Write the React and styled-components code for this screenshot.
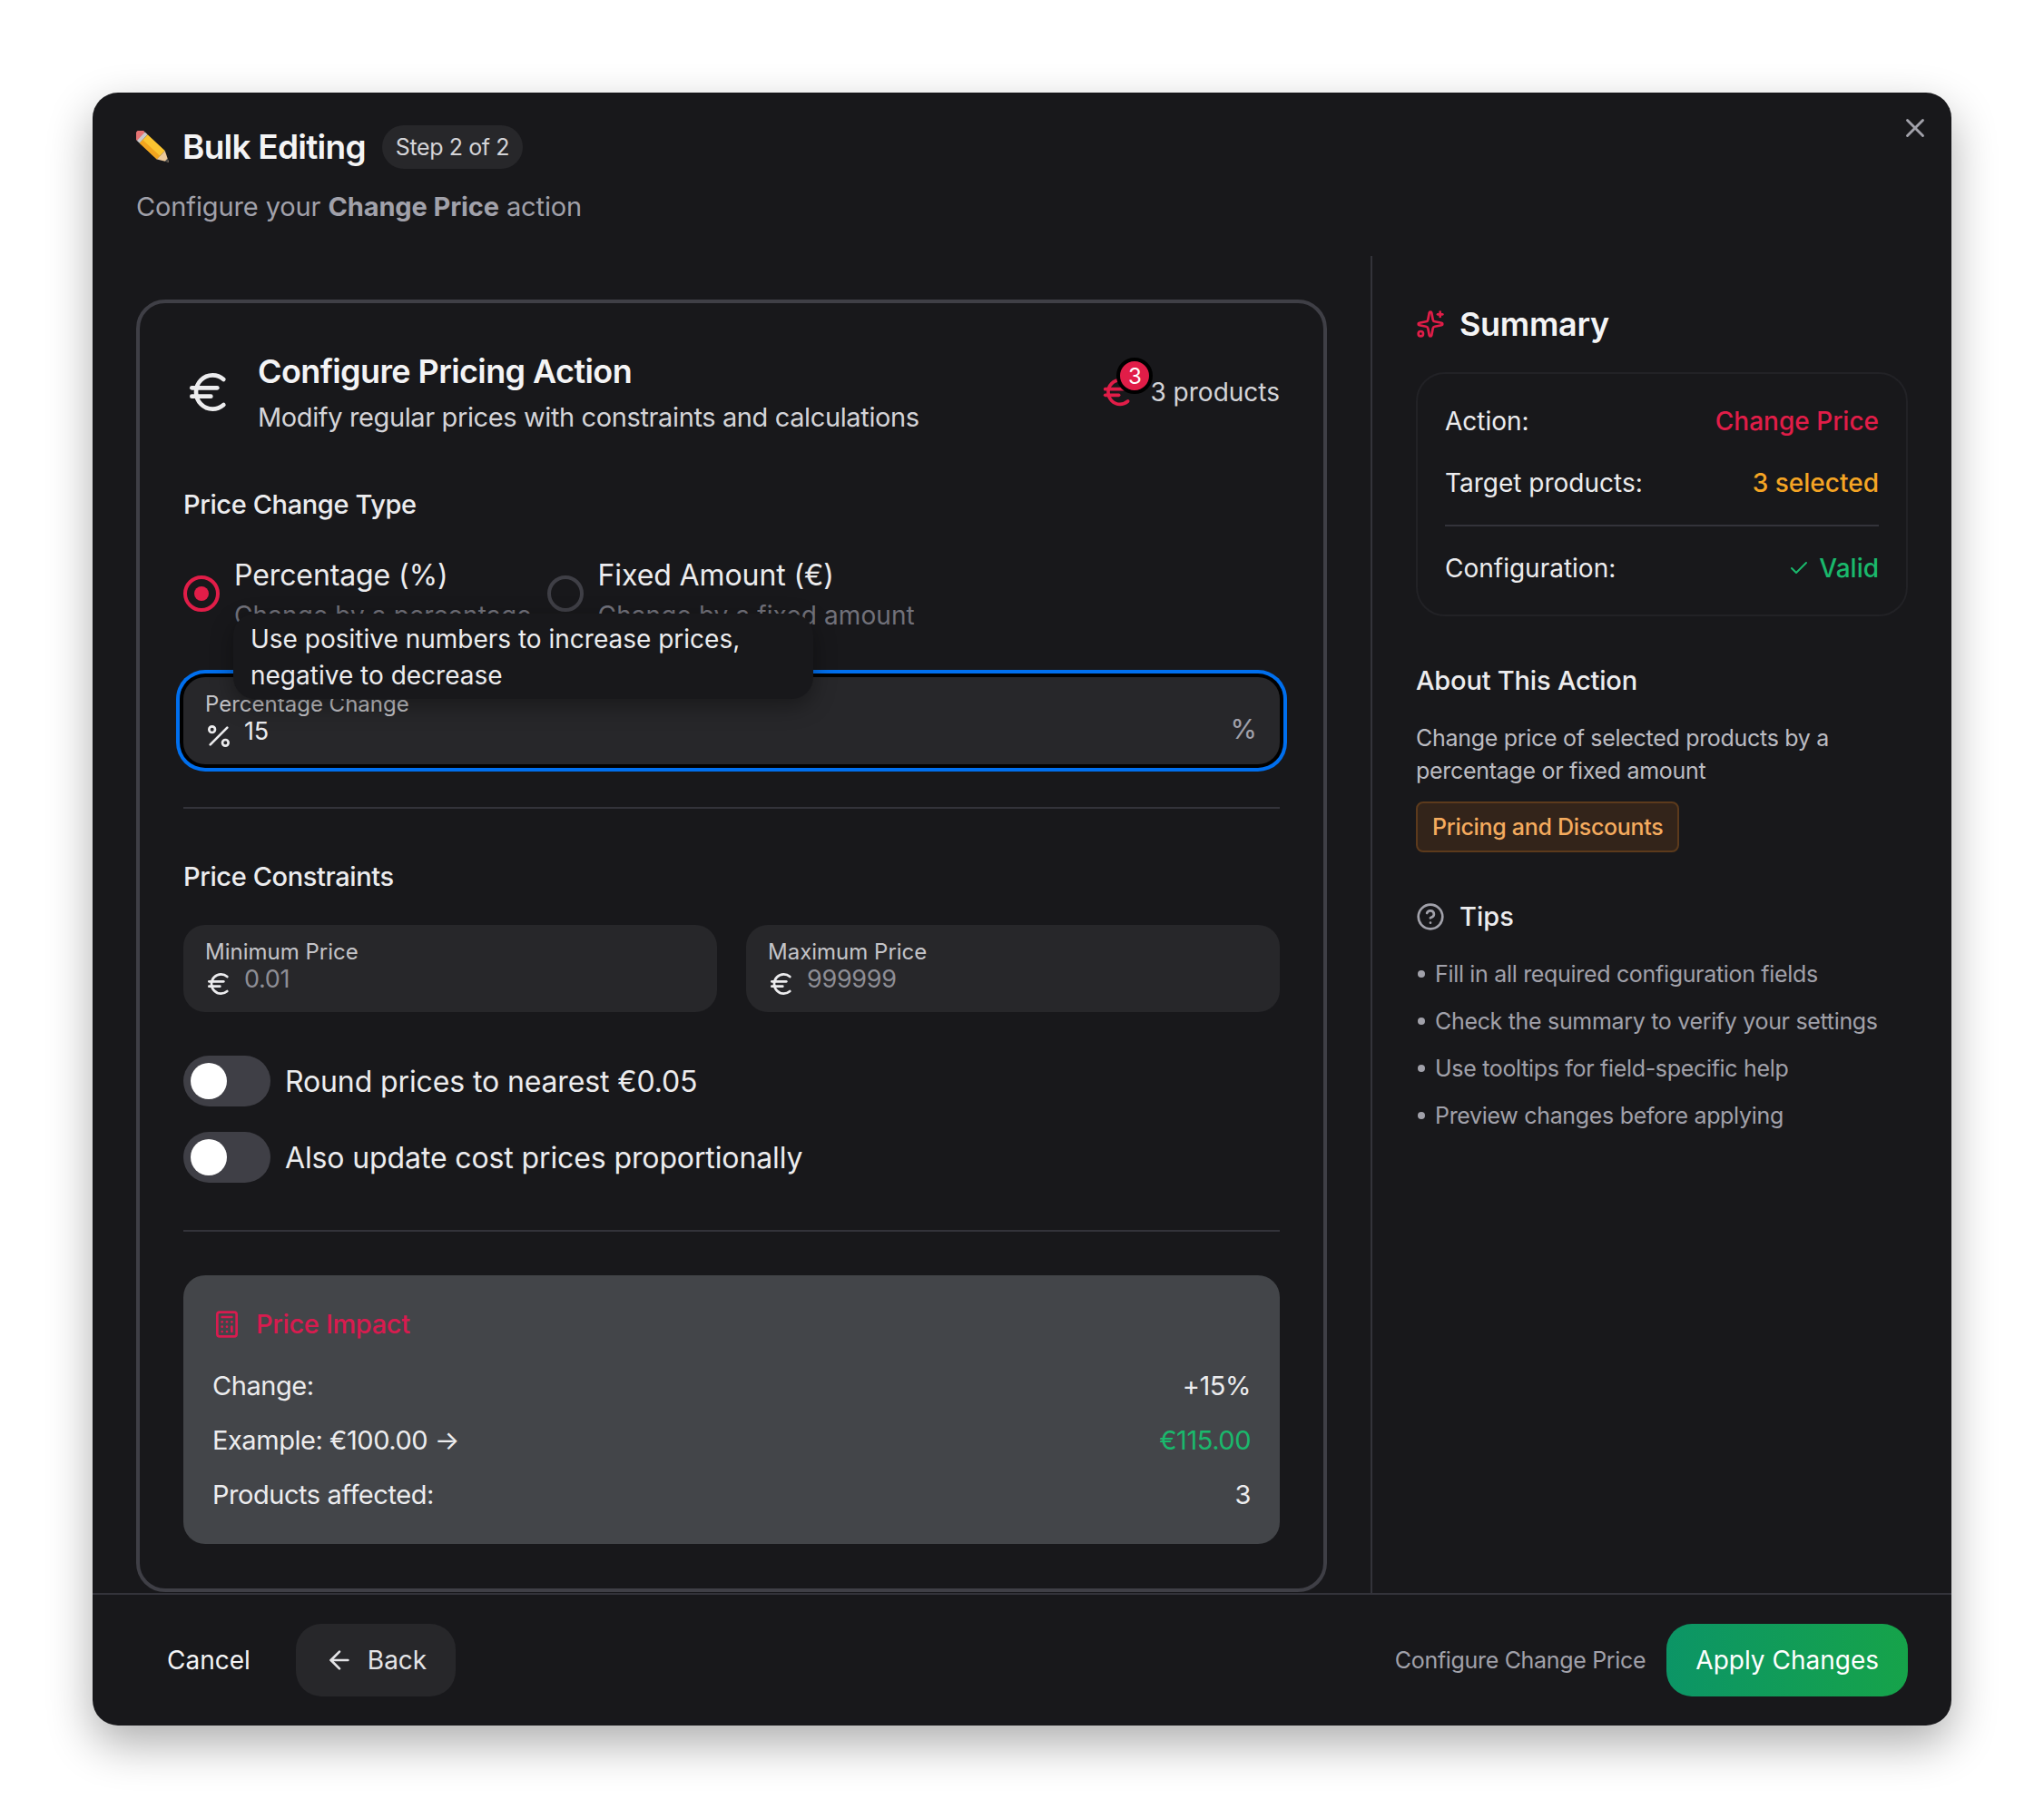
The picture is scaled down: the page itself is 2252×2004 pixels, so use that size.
import React from 'react';
import styled, { createGlobalStyle } from 'styled-components';
import { ArrowLeft, Calculator, Check, CircleHelp, Euro, Percent, Sparkles, X } from 'lucide-react';

const GlobalStyle = createGlobalStyle`
  html, body {
    margin: 0;
    background: #fff;
  }
  * {
    box-sizing: border-box;
  }
`;

const Page = styled.div`
  min-height: 2004px;
  padding-top: 102px;
  display: flex;
  align-items: flex-start;
  justify-content: center;
  font-family: Inter, "Liberation Sans", sans-serif;
  color: #ececee;
`;

const Dialog = styled.div`
  position: relative;
  width: 2048px;
  height: 1799px;
  display: flex;
  flex-direction: column;
  background: #18181b;
  border-radius: 28px;
  box-shadow: 0 20px 50px rgba(0, 0, 0, 0.32);
`;

const Close = styled.button`
  position: absolute;
  top: 22px;
  right: 23px;
  padding: 0;
  display: flex;
  background: none;
  border: 0;
  color: #a1a1aa;
`;

const Header = styled.header`
  height: 180px;
  padding: 36px 48px 0;
`;

const TitleRow = styled.div`
  display: flex;
  align-items: center;
  height: 48px;
`;

const Title = styled.h1`
  margin: -2px 0 0 14px;
  font-size: 37px;
  font-weight: 600;
  letter-spacing: -0.75px;
  color: #f4f4f5;
`;

const StepPill = styled.span`
  margin-left: 18px;
  height: 48px;
  padding: 0 15px;
  display: flex;
  align-items: center;
  border-radius: 24px;
  background: #27272a;
  font-size: 25px;
  letter-spacing: -0.4px;
  color: #d4d4d8;
`;

const Subtitle = styled.p`
  margin: 22px 0 0;
  font-size: 29px;
  line-height: 40px;
  letter-spacing: -0.12px;
  color: #a1a1aa;

  strong {
    font-weight: 700;
  }
`;

const Body = styled.div`
  flex: 1;
  min-height: 0;
  display: flex;
`;

const MainColumn = styled.main`
  width: 1408px;
  padding: 48px 48px 1px;
`;

const Card = styled.section`
  height: 100%;
  padding: 48px;
  border: 4px solid #3f3f46;
  border-radius: 32px;
`;

const CardHead = styled.div`
  display: flex;
  align-items: center;
  justify-content: space-between;
`;

const CardHeadLeft = styled.div`
  display: flex;
  align-items: center;
  gap: 26px;
`;

const CardTitle = styled.h2`
  margin: 1px 0 0;
  font-size: 36px;
  line-height: 52px;
  font-weight: 600;
  letter-spacing: -0.6px;
  color: #f4f4f5;
`;

const CardSubtitle = styled.p`
  margin: 3px 0 0;
  font-size: 29px;
  line-height: 44px;
  letter-spacing: -0.38px;
  color: #d4d4d8;
`;

const Count = styled.div`
  display: flex;
  align-items: center;
  font-size: 28px;
  color: #d4d4d8;
`;

const CountIcon = styled.span`
  position: relative;
  display: flex;
  margin-right: 16px;
  color: #e11d48;
`;

const CountBadge = styled.span`
  position: absolute;
  top: -18px;
  left: 19px;
  width: 40px;
  height: 40px;
  display: flex;
  align-items: center;
  justify-content: center;
  border: 4px solid #000;
  border-radius: 50%;
  background: #e11d48;
  font-size: 24px;
  color: #fff;
`;

const SectionLabel = styled.h3`
  margin: ${p => p.$top}px 0 0;
  font-size: 29px;
  line-height: 40px;
  font-weight: 500;
  letter-spacing: -0.38px;
  color: #ececee;
`;

const RadioGroup = styled.div`
  margin-top: 36px;
  display: flex;
  gap: 17px;
`;

const RadioItem = styled.div`
  display: flex;
  gap: 16px;
`;

const RadioCircle = styled.span`
  margin: 22px 0 0;
  width: 40px;
  height: 40px;
  flex: none;
  display: flex;
  align-items: center;
  justify-content: center;
  border: 4px solid ${p => (p.$checked ? '#e11d48' : '#3f3f46')};
  border-radius: 50%;

  &::after {
    content: '';
    display: ${p => (p.$checked ? 'block' : 'none')};
    width: 16px;
    height: 16px;
    border-radius: 50%;
    background: #e11d48;
  }
`;

const RadioLabel = styled.div`
  font-size: 32px;
  line-height: 44px;
  letter-spacing: -0.1px;
  color: #ececee;
`;

const RadioHint = styled.div`
  margin-top: 2px;
  font-size: 28px;
  line-height: 40px;
  letter-spacing: 0.1px;
  color: #71717a;
`;

const FocusedWrap = styled.div`
  position: relative;
  margin-top: 48px;
`;

const Tooltip = styled.div`
  position: absolute;
  z-index: 2;
  top: -70px;
  left: 55px;
  width: 639px;
  padding: 8px 19px 6px;
  background: #18181b;
  border-radius: 24px;
  box-shadow: 0 8px 24px rgba(0, 0, 0, 0.35);
  font-size: 28px;
  line-height: 40px;
  color: #ececee;
`;

const Field = styled.div`
  position: relative;
  height: 96px;
  flex: 1;
  padding: 15px 24px 0;
  border-radius: 24px;
  background: #27272a;
  box-shadow: ${p => (p.$focused ? '0 0 0 4px #000, 0 0 0 8px #006fee' : 'none')};
`;

const FieldLabel = styled.div`
  font-size: 24px;
  line-height: 30px;
  color: #c4c4c8;
`;

const FieldValue = styled.div`
  display: flex;
  align-items: center;
  gap: 11px;
  margin-top: -1px;
  font-size: 27px;
  line-height: 32px;
  letter-spacing: -0.3px;
  color: ${p => (p.$muted ? '#8e8e95' : '#ececee')};

  svg {
    color: #ececee;
    position: relative;
    top: 5px;
    left: -1px;
    flex: none;
  }
`;

const FieldSuffix = styled.span`
  position: absolute;
  right: 25px;
  top: 39px;
  font-size: 30px;
  color: #a1a1aa;
`;

const Divider = styled.hr`
  margin: ${p => p.$top}px 0 0;
  border: 0;
  height: 2px;
  background: #33333a;
`;

const FieldRow = styled.div`
  margin-top: 33px;
  display: flex;
  gap: 32px;
`;

const SwitchList = styled.div`
  margin-top: 48px;
  display: flex;
  flex-direction: column;
  gap: 28px;
`;

const SwitchRow = styled.div`
  display: flex;
  align-items: center;
  gap: 16px;
  font-size: 32px;
  letter-spacing: -0.12px;
  color: #ececee;
`;

const SwitchTrack = styled.span`
  width: 96px;
  height: 56px;
  padding: 8px;
  border-radius: 28px;
  background: #3f3f46;

  &::after {
    content: '';
    display: block;
    width: 40px;
    height: 40px;
    border-radius: 50%;
    background: #fff;
  }
`;

const Impact = styled.div`
  margin-top: 48px;
  padding: 34px 32px;
  border-radius: 24px;
  background: #434549;
`;

const ImpactTitle = styled.div`
  display: flex;
  align-items: center;
  gap: 16px;
  margin-bottom: 28px;
  font-size: 29px;
  line-height: 40px;
  font-weight: 500;
  letter-spacing: -0.35px;
  color: #d81b4f;
`;

const ImpactRows = styled.div`
  display: flex;
  flex-direction: column;
  gap: 20px;
`;

const ImpactRow = styled.div`
  display: flex;
  justify-content: space-between;
  font-size: 29px;
  line-height: 40px;
  letter-spacing: -0.45px;
  color: #ececee;
`;

const ImpactValue = styled.span`
  color: ${p => p.$color || '#ececee'};
`;

const Sidebar = styled.aside`
  flex: 1;
  padding: 51px 48px 0;
  border-left: 2px solid #33333a;
`;

const SideTitle = styled.h2`
  margin: 0 0 29px;
  display: flex;
  align-items: center;
  gap: 16px;
  font-size: 36px;
  line-height: 48px;
  font-weight: 600;
  letter-spacing: -0.3px;
  color: #f4f4f5;

  svg {
    color: #e11d48;
  }
`;

const SummaryCard = styled.div`
  padding: 32px 30px 31px;
  border: 2px solid #222226;
  border-radius: 32px;
`;

const SummaryRow = styled.div`
  display: flex;
  justify-content: space-between;
  margin-top: ${p => p.$top || 0}px;
  font-size: 28px;
  line-height: 40px;
  color: #ececee;
`;

const SummaryValue = styled.span`
  display: flex;
  align-items: center;
  gap: 10px;
  font-weight: 500;
  color: ${p => p.$color};
`;

const AboutTitle = styled.h3`
  margin: 51px 0 0;
  font-size: 29px;
  line-height: 40px;
  font-weight: 500;
  letter-spacing: -0.2px;
  color: #ececee;
`;

const AboutText = styled.p`
  margin: 25px 0 0;
  font-size: 25px;
  line-height: 36px;
  letter-spacing: -0.3px;
  color: #bcbcc2;
`;

const Tag = styled.span`
  margin-top: 16px;
  height: 56px;
  padding: 0 16px;
  display: inline-flex;
  align-items: center;
  border: 2px solid #5c3a1c;
  border-radius: 8px;
  background: #33241a;
  font-size: 25px;
  font-weight: 500;
  letter-spacing: -0.3px;
  color: #f5ab5e;
`;

const TipsTitle = styled.h3`
  margin: 51px 0 0;
  display: flex;
  align-items: center;
  gap: 16px;
  font-size: 29px;
  line-height: 40px;
  font-weight: 500;
  color: #ececee;

  svg {
    color: #a1a1aa;
  }
`;

const TipList = styled.ul`
  margin: 25px 0 0;
  padding: 0;
  list-style: none;
  display: flex;
  flex-direction: column;
  gap: 16px;
`;

const Tip = styled.li`
  display: flex;
  align-items: center;
  gap: 11px;
  font-size: 25px;
  line-height: 36px;
  letter-spacing: -0.32px;
  color: #a1a1aa;

  &::before {
    content: '';
    margin-left: 2px;
    width: 8px;
    height: 8px;
    border-radius: 50%;
    background: #a1a1aa;
  }
`;

const Footer = styled.footer`
  height: 146px;
  padding: 32px 48px;
  display: flex;
  align-items: center;
  justify-content: space-between;
  border-top: 2px solid #33333a;
`;

const FooterGroup = styled.div`
  display: flex;
  align-items: center;
  gap: 16px;
`;

const Button = styled.button`
  height: 80px;
  padding: 0 ${p => p.$pad || 32}px;
  display: flex;
  align-items: center;
  gap: 15px;
  border: 0;
  border-radius: 28px;
  background: ${p => p.$bg || 'transparent'};
  font-family: inherit;
  font-size: 28px;
  color: ${p => p.$color || '#f4f4f5'};
`;

const FooterNote = styled.span`
  margin-right: 7px;
  font-size: 25px;
  letter-spacing: -0.32px;
  color: #a1a1aa;
`;

const PencilIcon = () => (
  <svg width="37" height="37" viewBox="0 0 37 37">
    <g transform="translate(18.5 18.5) rotate(43)">
      <rect x="-25" y="-6.5" width="8" height="13" rx="2.5" fill="#e57373" />
      <rect x="-18" y="-6.5" width="4" height="13" fill="#c9c9cc" />
      <rect x="-14" y="-6.5" width="26" height="13" fill="#fbc531" />
      <rect x="-14" y="1.5" width="26" height="5" fill="#f2a51f" />
      <polygon points="12,-6.5 24,0 12,6.5" fill="#edc99a" />
      <polygon points="20,-2.2 24,0 20,2.2" fill="#4a4a4a" />
    </g>
  </svg>
);

const PriceField = ({ label, value }) => (
  <Field>
    <FieldLabel>{label}</FieldLabel>
    <FieldValue $muted>
      <Euro size={32} />
      {value}
    </FieldValue>
  </Field>
);

const tips = [
  'Fill in all required configuration fields',
  'Check the summary to verify your settings',
  'Use tooltips for field-specific help',
  'Preview changes before applying',
];

const App = () => (
  <Page>
    <GlobalStyle />
    <Dialog>
      <Close aria-label="Close">
        <X size={34} strokeWidth={2} />
      </Close>
      <Header>
        <TitleRow>
          <PencilIcon />
          <Title>Bulk Editing</Title>
          <StepPill>Step 2 of 2</StepPill>
        </TitleRow>
        <Subtitle>
          Configure your <strong>Change Price</strong> action
        </Subtitle>
      </Header>

      <Body>
        <MainColumn>
          <Card>
            <CardHead>
              <CardHeadLeft>
                <Euro size={56} strokeWidth={2} />
                <div>
                  <CardTitle>Configure Pricing Action</CardTitle>
                  <CardSubtitle>Modify regular prices with constraints and calculations</CardSubtitle>
                </div>
              </CardHeadLeft>
              <Count>
                <CountIcon>
                  <Euro size={40} strokeWidth={2.2} />
                  <CountBadge>3</CountBadge>
                </CountIcon>
                3 products
              </Count>
            </CardHead>

            <SectionLabel $top={54}>Price Change Type</SectionLabel>
            <RadioGroup>
              <RadioItem>
                <RadioCircle $checked />
                <div>
                  <RadioLabel>Percentage (%)</RadioLabel>
                  <RadioHint>Change by a percentage</RadioHint>
                </div>
              </RadioItem>
              <RadioItem>
                <RadioCircle />
                <div>
                  <RadioLabel>Fixed Amount (€)</RadioLabel>
                  <RadioHint>Change by a fixed amount</RadioHint>
                </div>
              </RadioItem>
            </RadioGroup>

            <FocusedWrap>
              <Tooltip>Use positive numbers to increase prices, negative to decrease</Tooltip>
              <Field $focused>
                <FieldLabel>Percentage Change</FieldLabel>
                <FieldValue>
                  <Percent size={32} />
                  15
                </FieldValue>
                <FieldSuffix>%</FieldSuffix>
              </Field>
            </FocusedWrap>

            <Divider $top={47} />

            <SectionLabel $top={55}>Price Constraints</SectionLabel>
            <FieldRow>
              <PriceField label="Minimum Price" value="0.01" />
              <PriceField label="Maximum Price" value="999999" />
            </FieldRow>

            <SwitchList>
              <SwitchRow>
                <SwitchTrack />
                Round prices to nearest €0.05
              </SwitchRow>
              <SwitchRow>
                <SwitchTrack />
                Also update cost prices proportionally
              </SwitchRow>
            </SwitchList>

            <Divider $top={52} />

            <Impact>
              <ImpactTitle>
                <Calculator size={32} />
                Price Impact
              </ImpactTitle>
              <ImpactRows>
                <ImpactRow>
                  <span>Change:</span>
                  <ImpactValue>+15%</ImpactValue>
                </ImpactRow>
                <ImpactRow>
                  <span>Example: €100.00 →</span>
                  <ImpactValue $color="#1ab86c">€115.00</ImpactValue>
                </ImpactRow>
                <ImpactRow>
                  <span>Products affected:</span>
                  <ImpactValue>3</ImpactValue>
                </ImpactRow>
              </ImpactRows>
            </Impact>
          </Card>
        </MainColumn>

        <Sidebar>
          <SideTitle>
            <Sparkles size={32} />
            Summary
          </SideTitle>
          <SummaryCard>
            <SummaryRow>
              <span>Action:</span>
              <SummaryValue $color="#e11d48">Change Price</SummaryValue>
            </SummaryRow>
            <SummaryRow $top={28}>
              <span>Target products:</span>
              <SummaryValue $color="#f5a524">3 selected</SummaryValue>
            </SummaryRow>
            <Divider $top={26} />
            <SummaryRow $top={26}>
              <span>Configuration:</span>
              <SummaryValue $color="#1ab86c">
                <Check size={24} />
                Valid
              </SummaryValue>
            </SummaryRow>
          </SummaryCard>

          <AboutTitle>About This Action</AboutTitle>
          <AboutText>Change price of selected products by a percentage or fixed amount</AboutText>
          <Tag>Pricing and Discounts</Tag>

          <TipsTitle>
            <CircleHelp size={32} />
            Tips
          </TipsTitle>
          <TipList>
            {tips.map(tip => (
              <Tip key={tip}>{tip}</Tip>
            ))}
          </TipList>
        </Sidebar>
      </Body>

      <Footer>
        <FooterGroup>
          <Button $pad={34}>Cancel</Button>
          <Button $bg="#27272a" $color="#e4e4e7" $pad={32}>
            <ArrowLeft size={32} />
            Back
          </Button>
        </FooterGroup>
        <FooterGroup>
          <FooterNote>Configure Change Price</FooterNote>
          <Button $bg="linear-gradient(90deg, #0c9566, #16a34a)" $color="#fff">
            Apply Changes
          </Button>
        </FooterGroup>
      </Footer>
    </Dialog>
  </Page>
);

export default App;
